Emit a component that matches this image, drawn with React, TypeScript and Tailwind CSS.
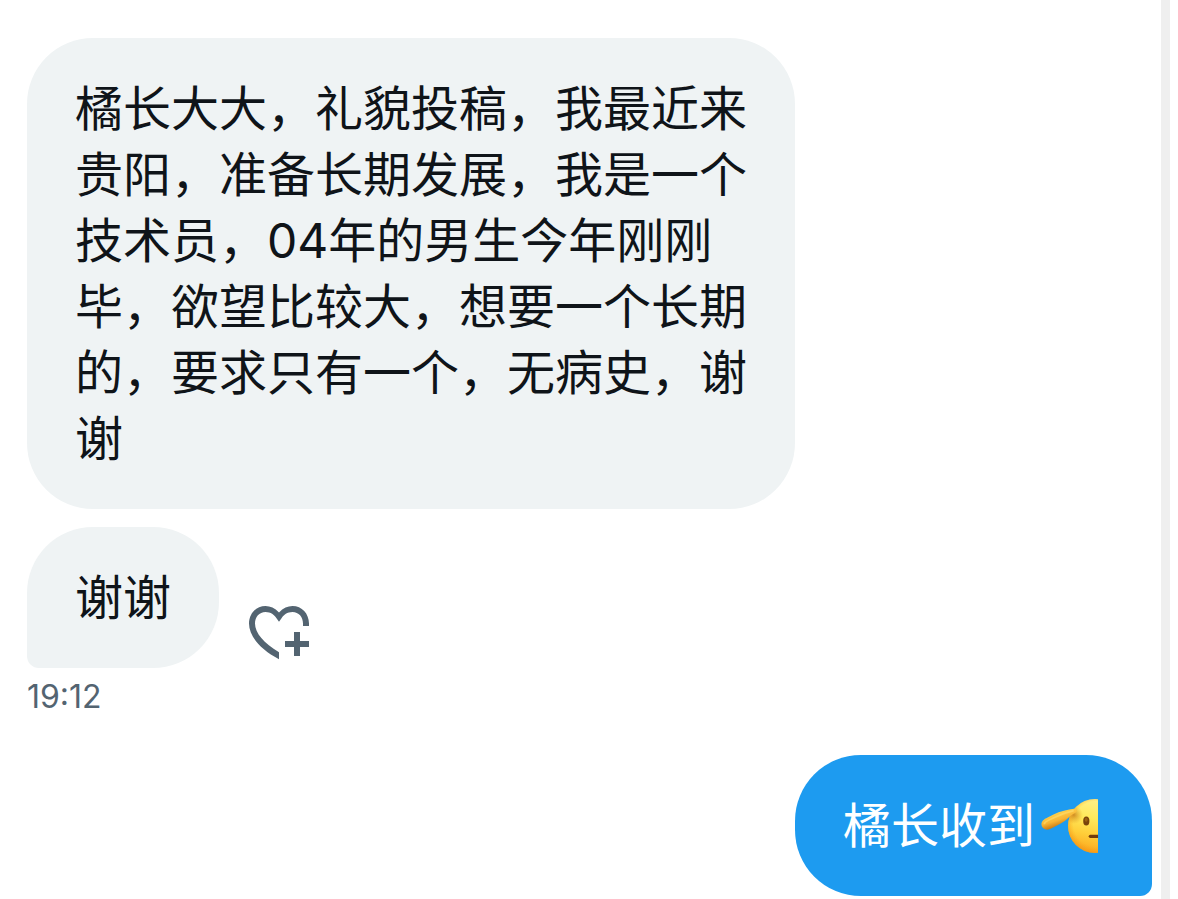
import type { ReactNode } from 'react';

function Bubble({ className, children }: { className: string; children: ReactNode }) {
  return (
    <p className={`px-12 pt-[38px] pb-[37px] text-[48px] leading-[66px] ${className}`}>{children}</p>
  );
}

function HeartPlusIcon() {
  return (
    <svg viewBox="0 0 24 24" className="size-[72px]" fill="currentColor" aria-hidden="true">
      <path d="M12 5.5C10.6 3.95 9.1 3.3 7.5 3.3C4.4 3.3 2 5.8 2 9.2C2 13.2 5.5 17.7 12 21.05V18.75C7 15.8 4 12.4 4 9.2C4 7 5.4 5.35 7.5 5.35C9.3 5.35 10.4 6.3 11.1 7.35L12 8.6L12.9 7.35C13.6 6.3 14.7 5.35 16.5 5.35C18.6 5.35 20 7 20 9.2V10H22V9.2C22 5.8 19.6 3.3 16.5 3.3C14.9 3.3 13.4 3.95 12 5.5Z" />
      <path d="M17 12H19V15H22V17H19V20H17V17H14V15H17Z" />
    </svg>
  );
}

function SaluteEmoji() {
  return (
    <svg viewBox="0 0 57 57" className="mx-[6px] size-[57px] shrink-0" aria-hidden="true">
      <defs>
        <linearGradient id="face" gradientUnits="userSpaceOnUse" x1="56" y1="1" x2="44" y2="55">
          <stop offset="0" stopColor="#fff08a" />
          <stop offset="0.35" stopColor="#ffe95c" />
          <stop offset="0.65" stopColor="#ffcf3a" />
          <stop offset="1" stopColor="#fba41c" />
        </linearGradient>
        <radialGradient id="edge" gradientUnits="userSpaceOnUse" cx="55" cy="26" r="30">
          <stop offset="0.75" stopColor="#f79a12" stopOpacity="0" />
          <stop offset="1" stopColor="#f08a0c" stopOpacity="0.6" />
        </radialGradient>
        <radialGradient id="shade" gradientUnits="userSpaceOnUse" cx="33" cy="17" r="9">
          <stop offset="0" stopColor="#b9640b" stopOpacity="0.65" />
          <stop offset="1" stopColor="#d98212" stopOpacity="0" />
        </radialGradient>
        <linearGradient id="hand" gradientUnits="userSpaceOnUse" x1="15" y1="15" x2="19" y2="28">
          <stop offset="0" stopColor="#ffd04a" />
          <stop offset="0.55" stopColor="#f7b435" />
          <stop offset="1" stopColor="#c97a14" />
        </linearGradient>
      </defs>
      <circle cx="54" cy="28" r="27" fill="url(#face)" />
      <circle cx="54" cy="28" r="27" fill="url(#edge)" />
      <circle cx="54" cy="28" r="27" fill="url(#shade)" />
      <ellipse cx="45.3" cy="23" rx="3.1" ry="4.6" fill="#79430b" />
      <ellipse cx="45.2" cy="21.8" rx="1.5" ry="2" fill="#9b6112" />
      <path d="M57 36.7H49.3a1.6 1.6 0 0 0 0 3.2H57Z" fill="#713b0b" />
      <path
        d="M.5 26.8C.2 23.6 2.8 21.2 6.6 19.6L12.5 16.5C19 13.2 27 11.7 33 10.8C36.3 10.5 36.8 13.4 34.3 14.8C30.6 16.9 28.4 19 25 22C22 24.7 18.6 26 14.6 28.2L10.2 30.6C5.8 33 .9 31 .5 26.8Z"
        fill="url(#hand)"
      />
      <path d="M3.4 25.4C5.4 22.4 10 21.4 14 19.2C20 16.1 26 14.1 32 12.8" fill="none" stroke="#ffdc6c" strokeWidth="1.8" strokeLinecap="round" opacity="0.65" />
    </svg>
  );
}

export default function App() {
  return (
    <div className="flex min-h-screen bg-white pr-2 font-['Inter','Noto_Sans_CJK_SC',sans-serif] text-[#0f1419]">
      <main lang="zh-CN" className="flex min-w-0 flex-1 flex-col items-start border-r-[9px] border-[#efefef] pt-[38px] pr-[9px] pb-[3px] pl-[27px]">
        <Bubble className="max-w-3xl rounded-[66px] bg-[#eff3f4]">
          橘长大大，礼貌投稿，我最近来贵阳，准备长期发展，我是一个技术员，04年的男生今年刚刚毕，欲望比较大，想要一个长期的，要求只有一个，无病史，谢谢
        </Bubble>
        <div className="mt-[18px] flex items-end gap-6">
          <Bubble className="rounded-[66px] rounded-bl-[12px] bg-[#eff3f4]">谢谢</Bubble>
          <button type="button" aria-label="添加心情" className="text-[#536471]">
            <HeartPlusIcon />
          </button>
        </div>
        <time className="mt-2 text-[32px] leading-[42px] text-[#536471]">19:12</time>
        <div className="mt-[37px] flex self-end">
          <Bubble className="flex items-center rounded-[66px] rounded-br-[12px] bg-[#1d9bf0] text-white">
            <span>橘长收到</span>
            <SaluteEmoji />
          </Bubble>
        </div>
      </main>
    </div>
  );
}
